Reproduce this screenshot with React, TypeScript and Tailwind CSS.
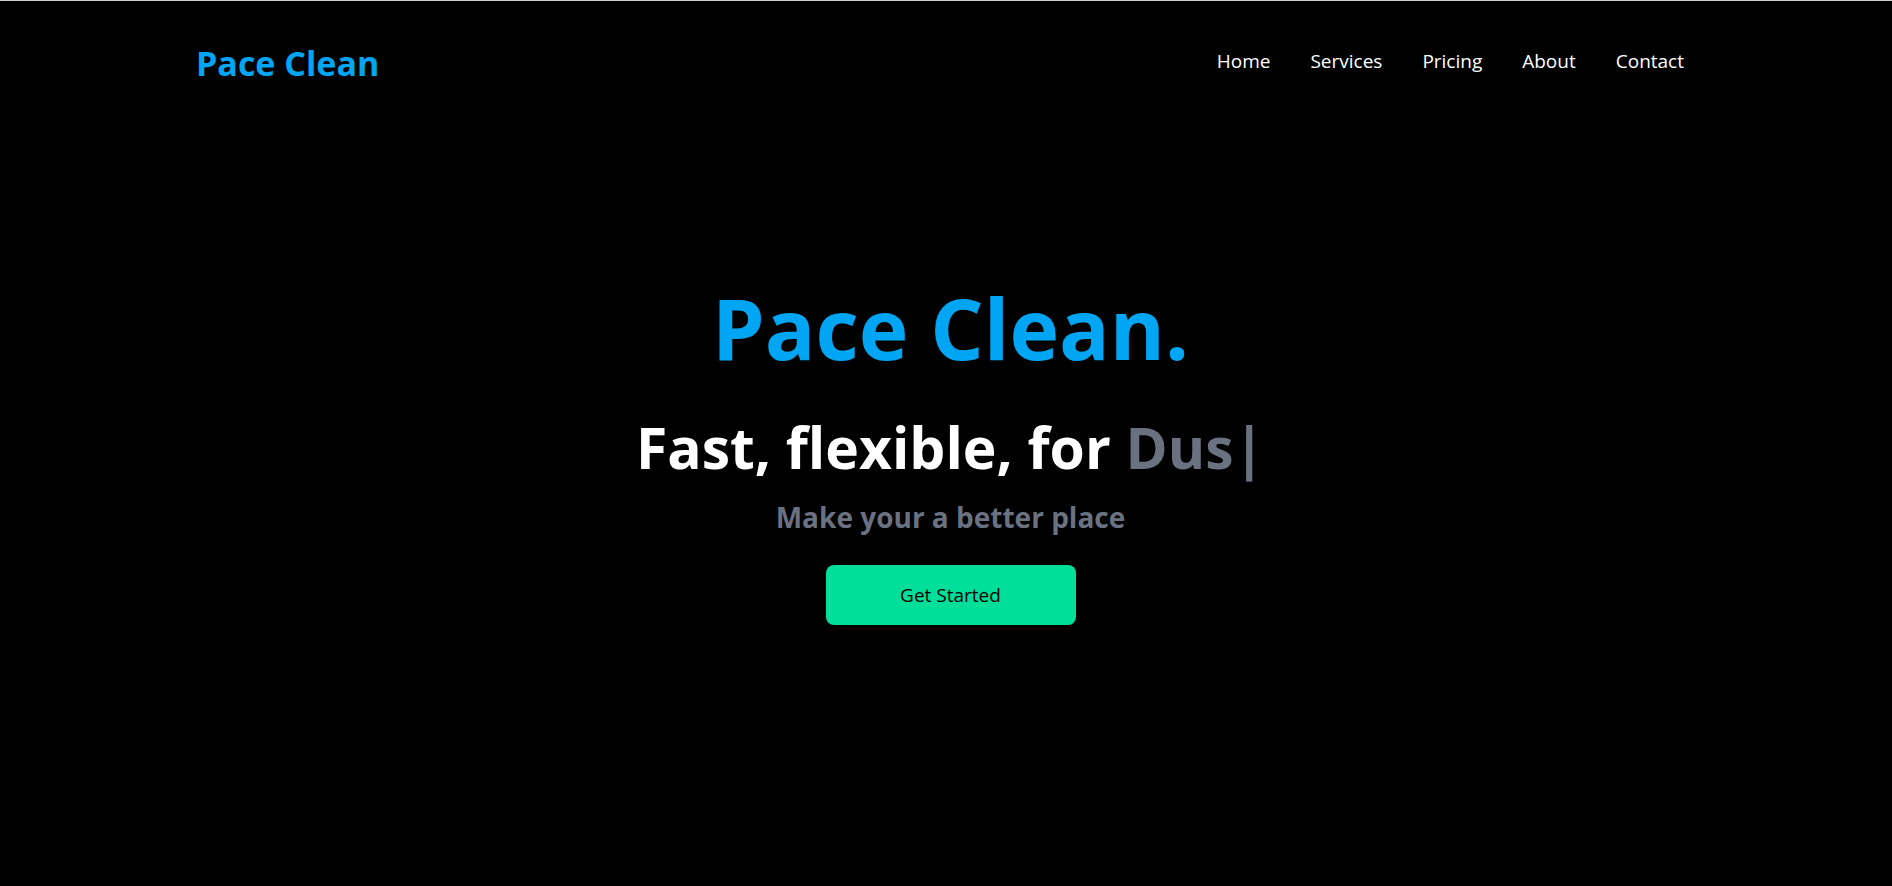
import React from 'react';

const links = ['Home', 'Services', 'Pricing', 'About', 'Contact'];

export default function App() {
  return (
    <div className="min-h-screen bg-black border-t border-[#cfcfcf] font-['Open_Sans',sans-serif]">
      <header className="flex items-center justify-between pl-[196px] pr-[208px] pt-[45px]">
        <a href="#" className="text-[34px] leading-none font-bold text-sky-500">
          Pace Clean
        </a>
        <nav className="flex items-center gap-10 -mt-[4px]">
          {links.map((l) => (
            <a key={l} href="#" className="text-[19px] text-white">
              {l}
            </a>
          ))}
        </nav>
      </header>

      <main className="flex flex-col items-center pt-[206px] pl-[9px]">
        <h1 className="text-[84px] leading-none font-bold text-sky-500">Pace Clean.</h1>
        <h2 className="mt-[49px] text-[57px] leading-none font-bold text-white">
          Fast, flexible, for <span className="text-gray-500">Dus|</span>
        </h2>
        <p className="mt-[20px] text-[28px] font-bold text-gray-500">Make your a better place</p>
        <button className="mt-[27px] w-[250px] h-[60px] rounded-lg bg-[#00df9a] text-[19px] text-black">
          Get Started
        </button>
      </main>
    </div>
  );
}
